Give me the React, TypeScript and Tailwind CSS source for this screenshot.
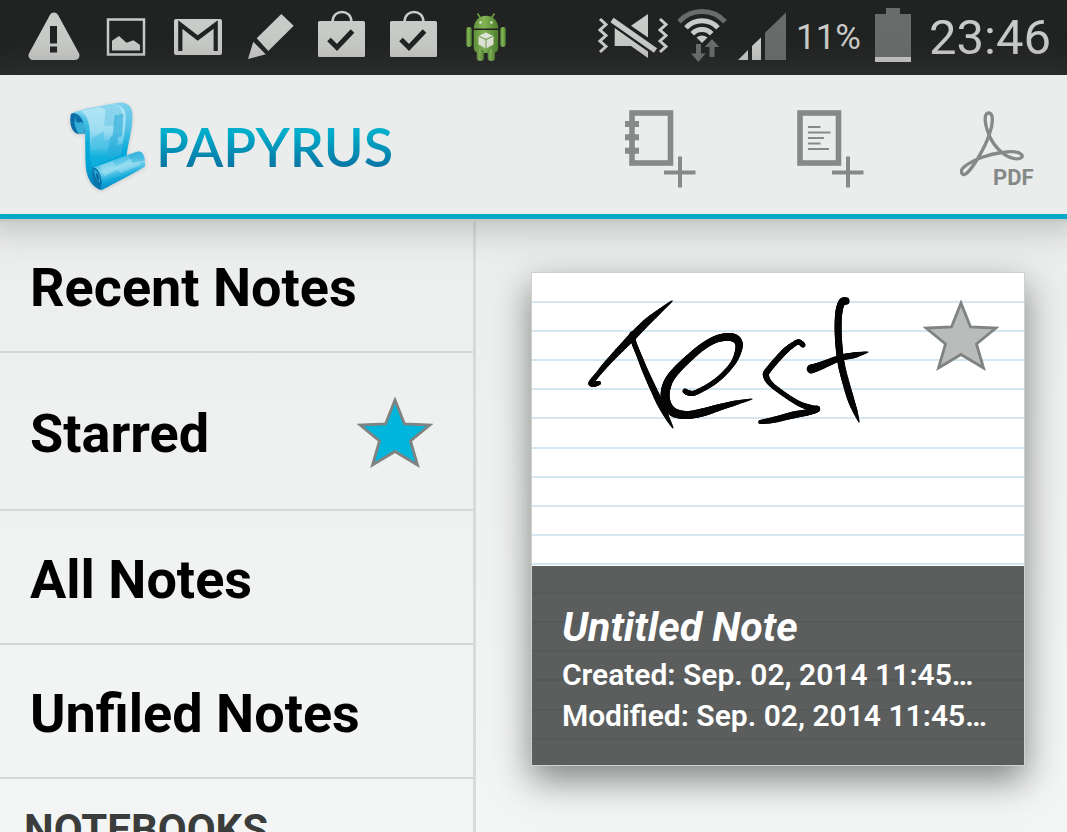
import type { ReactNode } from "react";

const navItems = [
  { label: "Recent Notes", height: "h-[134px]" },
  { label: "Starred", height: "h-[158px]", star: true },
  { label: "All Notes", height: "h-[134px]" },
  { label: "Unfiled Notes", height: "h-[134px]" },
];

// pen strokes of the note preview: x, y, pressure
type Point = [number, number, number];

const strokes: Point[][] = [
  [[140, 28, 1], [129, 37, 4], [115, 49, 7], [100, 64, 8], [78, 87, 6], [66, 101, 5], [59, 110, 5], [63, 111, 5], [67, 110, 4]],
  [[100, 61, 5], [102, 70, 5], [106, 80, 5], [115, 102, 6], [128, 130, 7], [136, 146, 4], [141, 155, 1]],
  [
    [153, 118, 5], [157, 120, 5], [165, 119, 5], [185, 107, 5], [201, 90, 5], [207, 74, 7], [204, 66, 8], [195, 64, 8],
    [182, 67, 7], [165, 78, 7], [142, 100, 8], [134, 115, 9], [134, 129, 9], [141, 139, 9], [155, 142, 8], [172, 139, 8], [185, 135, 7], [203, 130, 5], [220, 126, 1],
  ],
  [[271, 72, 5], [267, 69, 5], [262, 71, 5], [252, 79, 6], [237, 96, 6], [234, 103, 6], [241, 113, 5], [264, 129, 5], [279, 135, 6], [285, 136, 6], [277, 139, 6], [261, 142, 7], [241, 147, 6], [228, 149, 4]],
  [[314, 28, 7], [310, 29, 7], [307, 38, 7], [306, 54, 7], [307, 74, 7], [310, 95, 7], [318, 124, 7], [323, 138, 5], [327, 149, 1]],
  [[279, 96, 9], [288, 93, 8], [308, 85, 6], [323, 82, 6], [336, 79, 1]],
];

const catmull = (a: number, b: number, c: number, d: number, t: number) =>
  0.5 * (2 * b + (c - a) * t + (2 * a - 5 * b + 4 * c - d) * t * t + (3 * b - a - 3 * c + d) * t * t * t);

function smooth(points: Point[]): Point[] {
  const out: Point[] = [];
  for (let i = 0; i < points.length - 1; i++) {
    const p0 = points[Math.max(i - 1, 0)];
    const p1 = points[i];
    const p2 = points[i + 1];
    const p3 = points[Math.min(i + 2, points.length - 1)];
    for (let s = 0; s < 8; s++) {
      const t = s / 8;
      out.push([catmull(p0[0], p1[0], p2[0], p3[0], t), catmull(p0[1], p1[1], p2[1], p3[1], t), p1[2] + (p2[2] - p1[2]) * t]);
    }
  }
  out.push(points[points.length - 1]);
  return out;
}

function InkStroke({ points }: { points: Point[] }) {
  const pts = smooth(points);
  return (
    <g stroke="#050505" strokeLinecap="round">
      {pts.slice(1).map((p, i) => (
        <line key={i} x1={pts[i][0]} y1={pts[i][1]} x2={p[0]} y2={p[1]} strokeWidth={p[2]} />
      ))}
    </g>
  );
}

function NotePaper() {
  const lines = Array.from({ length: 16 }, (_, i) => Math.round(28 + i * 29.11));
  return (
    <svg viewBox="0 0 492 492" className="absolute inset-0 h-full w-full" role="img" aria-label="Handwritten note">
      {lines.map((y) => (
        <rect key={y} x="0" y={y} width="492" height="2" fill="#d4e6f0" />
      ))}
      {strokes.map((points, i) => (
        <InkStroke key={i} points={points} />
      ))}
    </svg>
  );
}

const Star = ({ fill }: { fill: string }) => (
  <svg viewBox="0 0 76 72" className="h-[72px] w-[76px]" aria-hidden="true">
    <path
      d="M38 3 L47.5 27 L73 28 L53.5 44 L60.5 68 L38 54.500 L15.500 68 L22.500 44 L3 28 L28.500 27 Z"
      fill={fill}
      stroke="#7f8381"
      strokeWidth="2.8"
    />
  </svg>
);

const StatusIcon = ({ width, children }: { width: number; children: ReactNode }) => (
  <svg width={width} height="61" viewBox={`0 0 ${width} 61`} fill="#c9cbc8" className="shrink-0" aria-hidden="true">
    {children}
  </svg>
);

const BagIcon = () => (
  <StatusIcon width={48}>
    <rect x="0" y="14" width="47" height="36" rx="1.500" />
    <path d="M14.500 15 C14.500 1.500 33.500 1.500 33.500 15" fill="none" stroke="#c9cbc8" strokeWidth="2.5" />
    <path d="M11 32.500 L19 40.500 L34.500 24" fill="none" stroke="#212322" strokeWidth="5" />
  </StatusIcon>
);

function StatusBar() {
  return (
    <div className="flex h-[75px] shrink-0 items-center justify-between bg-[#212322] pl-7 pr-4 text-[#c9cbc8]">
      <div className="flex items-center gap-6">
        <StatusIcon width={52}>
          <path d="M26 10 L5 48.500 L47 48.500 Z" stroke="#c9cbc8" strokeWidth="9" strokeLinejoin="round" />
          <path d="M22 19 h7 v17.500 h-7 Z M22 39.500 h7 v6 h-7 Z" fill="#212322" />
        </StatusIcon>
        <StatusIcon width={44}>
          <rect x="4" y="12.500" width="36" height="35" fill="none" stroke="#c9cbc8" strokeWidth="2.5" />
          <path d="M8 33.700 L15 29 L22.500 35.700 L29.500 33.300 L36 38 V43.500 H8 Z" />
        </StatusIcon>
        <StatusIcon width={52}>
          <rect x="2" y="12" width="48" height="36" rx="2" />
          <path d="M8.300 44 V17.500 L25.700 31 L43.700 17.500 V44" fill="none" stroke="#212322" strokeWidth="4.200" />
        </StatusIcon>
        <StatusIcon width={46}>
          <path d="M0 52 L5.300 34.700 L17.700 47.300 Z M33.300 7 L45.700 18.700 L20.300 44 L8.700 31.300 Z" />
        </StatusIcon>
        <BagIcon />
        <BagIcon />
        <StatusIcon width={48}>
          <defs>
            <linearGradient id="droid" x1="0" x2="1" y1="0" y2="0">
              <stop offset="0" stopColor="#5f8f38" />
              <stop offset="0.4" stopColor="#83b556" />
              <stop offset="1" stopColor="#4f7f2c" />
            </linearGradient>
          </defs>
          <path d="M15.500 6.500 L18.500 11 M32.500 6.500 L29.500 11" stroke="#74a348" strokeWidth="1.500" />
          <g fill="url(#droid)">
            <path d="M11.700 21.500 C12 4.500 36 4.500 36.300 21.500 Z" />
            <path d="M11.700 23 H36.300 V40 Q36.300 46 30 46 H18 Q11.700 46 11.700 40 Z" />
            <rect x="4.300" y="20" width="5.500" height="20" rx="2.700" />
            <rect x="38.300" y="20" width="5.500" height="20" rx="2.700" />
            <rect x="14.700" y="42" width="7.300" height="12" rx="3.500" />
            <rect x="25.700" y="42" width="7.300" height="12" rx="3.500" />
          </g>
          <circle cx="18.500" cy="15.500" r="1.200" fill="#e4eedb" />
          <circle cx="29.500" cy="15.500" r="1.200" fill="#e4eedb" />
          <path d="M24 25.500 L31.500 29 V37.500 L24 41.500 L16.500 37.500 V29 Z" fill="#dfe5d8" />
          <path d="M16.500 29 L24 32.500 L31.500 29 M24 32.500 V41.500" fill="none" stroke="#7fa65e" strokeWidth="1.200" />
        </StatusIcon>
      </div>
      <div className="flex items-center gap-[10px]">
        <StatusIcon width={70}>
          <path
            d="M2 12 L8 17.500 L2 23 L8 28.500 L2 34 L8 39.500 L2 45 M62 12 L68 17.500 L62 23 L68 28.500 L62 34 L68 39.500 L62 45"
            fill="none"
            stroke="#c9cbc8"
            strokeWidth="3"
          />
          <path d="M50 7 V30.500 L33 18.700 Z M16.700 21 L50 44.500 V51 L33 39 H16.700 Z" />
          <path d="M14 13 L57.500 43.500" stroke="#212322" strokeWidth="9" />
          <path d="M14 13 L57.500 43.500" stroke="#c9cbc8" strokeWidth="5.5" />
        </StatusIcon>
        <StatusIcon width={50}>
          <g fill="none" stroke="#c9cbc8" strokeWidth="5">
            <path d="M1 14.800 A31 31 0 0 1 47 14.800" stroke="#6a6c6b" />
            <path d="M8 20.900 A21.500 21.500 0 0 1 40 20.900" />
            <path d="M14.300 26.700 A13.300 13.300 0 0 1 33.700 26.700" />
          </g>
          <path d="M18.500 30.500 Q24 26.500 29.500 30.500 L24 36 Z" />
          <path
            d="M34 32 L41.300 40 H36.500 V50 H31.500 V40 H26.700 Z M20.300 55 L13 46.500 H18 V37 H23 V46.500 H27.700 Z"
            fill="#6a6c6b"
          />
        </StatusIcon>
        <StatusIcon width={48}>
          <path d="M0 53 L10 43 V53 Z M14 39 L23 30.500 V53 H14 Z" />
          <path d="M27 25.700 L48 5.500 V53 H27 Z" fill="#6a6c6b" />
        </StatusIcon>
        <span className="mr-0.5 text-[35px] leading-none">11%</span>
        <StatusIcon width={38}>
          <path d="M2 7 H13 V1 H27 V7 H38 V50 H2 Z" fill="#6a6c6b" />
          <rect x="2" y="50" width="36" height="5" />
        </StatusIcon>
        <time className="ml-2 text-[49px] leading-none">23:46</time>
      </div>
    </div>
  );
}

const ScrollLogo = () => (
  <svg viewBox="58 50 232 273" className="h-[91px] w-[77px] drop-shadow-sm" aria-hidden="true">
    <defs>
      <linearGradient id="sheet" x1="0.3" y1="0" x2="0.5" y2="1">
        <stop offset="0" stopColor="#8ad6ef" />
        <stop offset="0.5" stopColor="#4fc0e5" />
        <stop offset="0.8" stopColor="#00a9d8" />
      </linearGradient>
      <linearGradient id="face" x1="0" y1="0" x2="0" y2="1">
        <stop offset="0" stopColor="#b5e6f5" />
        <stop offset="0.45" stopColor="#9adcf1" />
        <stop offset="0.85" stopColor="#10b0dd" />
      </linearGradient>
      <linearGradient id="edge" x1="0" y1="0" x2="0" y2="1">
        <stop offset="0" stopColor="#5fc8e8" />
        <stop offset="0.4" stopColor="#08abd8" />
        <stop offset="0.7" stopColor="#02a3d4" />
        <stop offset="1" stopColor="#0873ad" />
      </linearGradient>
      <linearGradient id="roll" x1="0.35" y1="0.1" x2="0.65" y2="0.9">
        <stop offset="0.1" stopColor="#3fbbe3" />
        <stop offset="0.4" stopColor="#83d7ef" />
        <stop offset="0.7" stopColor="#12a7da" />
        <stop offset="1" stopColor="#0783bd" />
      </linearGradient>
    </defs>
    <path d="M64 88 C58 112 64 142 82 148 L106 147 L104 100 L78 84 Z" fill="#0b6ea6" />
    <path d="M82 92 C72 108 82 120 96 112 L104 120 L104 147 L88 147 C74 130 70 104 82 92 Z" fill="#35aed8" />
    <path d="M68 85 C90 76 150 64 212 54 C242 54 250 74 249 98 C248 145 236 172 231 218 L128 262 L112 262 C107 230 108 190 107 150 C106 112 96 88 68 85 Z" fill="url(#sheet)" />
    <path d="M72 85 C96 82 122 104 121 145 C120 185 118 225 133 252 L150 316 C122 306 108 272 108 235 L107 150 C106 112 96 88 72 85 Z" fill="url(#edge)" />
    <path d="M92 79 L190 59 C216 60 230 74 229 100 C228 140 220 175 215 212 L128 246 C119 222 122 180 121 145 C120 112 112 88 92 79 Z" fill="url(#face)" />
    <path d="M190 59 C214 62 218 74 218 96 L204 88 L196 124 L164 124 L168 75 L150 68 Z" fill="#64c5e5" opacity="0.5" />
    <path d="M196 92 L222 88 L218 155 L206 160 L204 182 L224 178 L212 212 L174 226 L176 170 L190 150 Z" fill="#25a9d8" opacity="0.6" />
    <path d="M125 165 L164 140 L164 170 L184 165 L178 192 L126 196 Z" fill="#50c3e6" opacity="0.65" />
    <path d="M130 250 C170 236 220 216 264 202 C282 198 288 218 287 245 C280 254 208 290 156 318 C138 306 126 278 130 250 Z" fill="url(#roll)" />
    <path d="M151 244 L190 230 L200 248 L244 222 L270 226 L272 242 L214 266 L204 256 L164 276 Z" fill="#b3e6f6" opacity="0.4" />
    <path d="M236 212 L264 202 C276 200 284 210 286 228 L250 236 Z" fill="#2aabd9" opacity="0.5" />
    <path d="M129 250 C142 246 156 270 157 298 L152 318 C134 308 125 278 129 250 Z" fill="#0a72ab" />
    <path d="M133 256 C144 256 152 276 151 294 C142 290 134 274 133 256 Z" fill="#2ba7d4" />
    <path d="M140 266 C147 270 149 282 147 290 C142 284 139 276 140 266 Z" fill="#075d92" />
  </svg>
);

function Header() {
  return (
    <header className="relative z-10 flex h-[144px] shrink-0 items-center justify-between border-b-[5px] border-[#00a8c5] bg-[#ebedec] pl-[69px] pr-[31px] shadow-[0_3px_0_#c7c9c7,0_0_30px_12px_rgba(80,84,80,0.28)]">
      <a href="#" className="flex items-center gap-2.5 pt-1">
        <ScrollLogo />
        <span className="bg-linear-to-b from-[#00aecb] from-25% to-[#0878a5] to-80% bg-clip-text font-[Lato,sans-serif] text-[54px] font-semibold leading-[60px] text-transparent">
          PAPYRUS
        </span>
      </a>
      <nav className="flex items-center gap-24 pt-2" aria-label="Create">
        <button type="button" aria-label="New notebook">
          <svg width="72" height="80" viewBox="0 0 72 80" fill="#858987">
            <rect x="8" y="4" width="38.500" height="50" fill="none" stroke="#858987" strokeWidth="5.600" />
            <path d="M1 12 h14 v6 h-14 Z M1 25.300 h14 v6 h-14 Z M1 38.700 h14 v6 h-14 Z" />
            <path d="M54 47.500 h4 v14 h13.500 v4 h-13.500 v13 h-4 v-13 h-14 v-4 h14 Z" />
          </svg>
        </button>
        <button type="button" aria-label="New note">
          <svg width="72" height="80" viewBox="0 0 72 80" fill="#858987">
            <rect x="8" y="4" width="38.500" height="50" fill="none" stroke="#858987" strokeWidth="5.600" />
            <path d="M16 17 h12.500 v2 h-12.500 Z M16 22.500 h22.500 v2 h-22.500 Z M16 28 h16 v2 h-16 Z M16 33.500 h12.500 v2 h-12.500 Z M16 39 h21 v2 h-21 Z" />
            <path d="M54 47.500 h4 v14 h13.500 v4 h-13.500 v13 h-4 v-13 h-14 v-4 h14 Z" />
          </svg>
        </button>
        <button type="button" aria-label="Import PDF">
          <svg width="76" height="80" viewBox="0 0 76 80" fill="none">
            <path
              d="M28.700 4 C34 4 33 16 29.300 25.300 C26 36 21 44 17.300 50.300 C13 57 9 64 4.500 65.500 C1 66 0 61 4 58 C14 50 30 45 42 43.500 C50 42 58 42.500 61.500 45.500 C64.500 49 58 50.500 54 49.500 C46 48 35 40 29 26 C25 16 23 4 28.700 4 Z"
              stroke="#858987"
              strokeWidth="3.300"
            />
            <text x="33" y="76" fill="#858987" className="text-[22px] font-bold">
              PDF
            </text>
          </svg>
        </button>
      </nav>
    </header>
  );
}

function Sidebar() {
  return (
    <aside className="w-[44.6%] shrink-0 border-r-[3px] border-[#d9dbda]">
      <ul>
        {navItems.map((item) => (
          <li key={item.label} className={`${item.height} border-b-2 border-[#d6d8d7]`}>
            <a href="#" className="flex h-full items-center justify-between pl-[30px] pr-10 pt-1 text-[54px] font-bold text-black">
              {item.label}
              {item.star && <Star fill="#00b6dc" />}
            </a>
          </li>
        ))}
      </ul>
      <h2 className="pl-6 pt-[26px] text-[42px] font-bold leading-[50px] text-[#3a3d3c]">NOTEBOOKS</h2>
    </aside>
  );
}

function NoteCard() {
  return (
    <article className="relative flex aspect-square flex-col justify-end border border-[#cfd1cf] bg-white shadow-[0_14px_34px_rgba(50,54,50,0.6)]">
      <NotePaper />
      <button type="button" aria-label="Star note" className="absolute right-[25px] top-[27px]">
        <Star fill="#b9bcba" />
      </button>
      <div className="relative bg-[#323634]/80 pb-[29px] pl-[30px] pr-7 pt-9 text-white">
        <h3 className="text-[41px] font-bold italic leading-[50px]">Untitled Note</h3>
        <p className="pt-[2px] text-[30px] font-semibold leading-[41px]">Created: Sep. 02, 2014 11:45…</p>
        <p className="text-[30px] font-semibold leading-[41px]">Modified: Sep. 02, 2014 11:45…</p>
      </div>
    </article>
  );
}

export default function App() {
  return (
    <div className="flex h-screen flex-col overflow-hidden bg-linear-to-b from-[#e9ebea] to-[#f4f6f5] font-[Roboto,sans-serif]">
      <StatusBar />
      <Header />
      <div className="flex min-h-0 flex-1">
        <Sidebar />
        <main className="min-w-0 flex-1 pl-[55px] pr-[42px] pt-[53px]">
          <NoteCard />
        </main>
      </div>
    </div>
  );
}
